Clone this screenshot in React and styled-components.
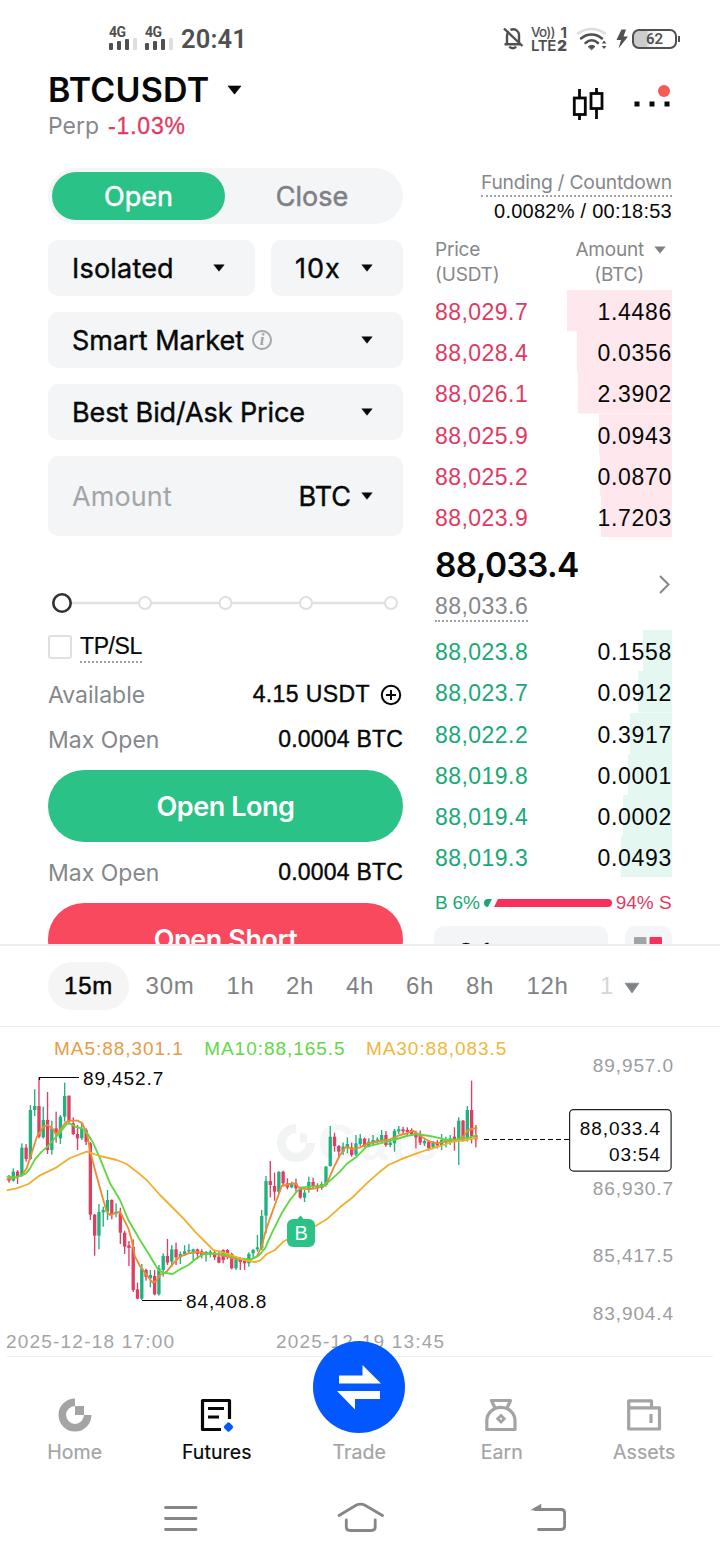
import React from 'react';
import styled, { createGlobalStyle, css } from 'styled-components';

const GlobalStyle = createGlobalStyle`
  * {
    box-sizing: border-box;
  }

  body {
    margin: 0;
    background-color: #ffffff;
  }

  svg {
    display: block;
    flex: none;
  }
`;

const textFont = css`
  font-family: Inter, "Liberation Sans", sans-serif;
`;

const numberFont = css`
  font-family: "Liberation Sans", Arial, sans-serif;
`;

const green = '#2bc287';
const red = '#f9495f';

const Screen = styled.div`
  ${textFont};
  display: flex;
  flex-direction: column;
  width: 720px;
  height: 1560px;
  overflow: hidden;

  background-color: #ffffff;
  color: #070808;
  white-space: nowrap;
`;

/* ---------- status bar ---------- */

const StatusBar = styled.div`
  display: flex;
  justify-content: space-between;
  align-items: center;
  flex: none;
  height: 77px;
  padding: 0 40px 0 109px;
  color: #505050;
`;

const StatusGroup = styled.div`
  display: flex;
  align-items: center;
`;

const Signal = styled.div`
  width: 36px;
  height: 26px;

  font-family: Roboto, sans-serif;
  font-size: 14px;
  font-weight: 700;
  line-height: 12px;
  letter-spacing: -0.5px;
`;

const Clock = styled.div`
  font-family: Roboto, sans-serif;
  font-size: 25.5px;
  font-weight: 600;
  letter-spacing: 0.15px;
`;

const Volte = styled.div`
  width: 36px;
  margin: 0 9px 0 7px;
`;

const VolteLine = styled.div`
  display: flex;
  justify-content: space-between;
  height: 13px;
  font-size: ${(p) => (p.$small ? '13.5px' : '15px')};
  font-weight: ${(p) => (p.$small ? 500 : 600)};
  line-height: 13px;
  letter-spacing: ${(p) => (p.$small ? '-0.8px' : '-0.4px')};

  b {
    font-size: 15px;
    letter-spacing: 0;
  }
`;

const Bolt = styled.svg`
  margin-left: 8px;
`;

const Battery = styled.div`
  display: flex;
  align-items: center;
  justify-content: center;
  width: 45px;
  height: 20px;
  margin-left: 4px;
  border: 2px solid #505050;
  border-radius: 7px;

  background: linear-gradient(90deg, #cccccc 30%, #e6e6e6 35%, #ffffff 60%);
  font-family: Roboto, sans-serif;
  font-size: 15px;
  font-weight: 600;
`;

const BatteryTip = styled.div`
  width: 2px;
  height: 6px;
  margin-left: 1px;
  background-color: #505050;
`;

/* ---------- header ---------- */

const Header = styled.header`
  display: flex;
  justify-content: space-between;
  flex: none;
  height: 91px;
  padding: 0 48px;
`;

const PairName = styled.div`
  display: flex;
  align-items: center;
  gap: 18px;
  height: 25px;
  font-size: 34px;
  font-weight: 600;
  letter-spacing: 0.2px;
`;

const PairInfo = styled.div`
  display: flex;
  align-items: center;
  gap: 9px;
  height: 48px;
  color: #85888b;
  font-size: 23px;
`;

const Change = styled.span`
  ${numberFont};
  color: #e23860;
  font-size: 23px;
  letter-spacing: 0.8px;
  -webkit-text-stroke: 0.3px #e23860;
`;

const HeaderIcons = styled.div`
  display: flex;
  gap: 28px;
  padding-top: 5px;
`;

/* ---------- trade form ---------- */

const Trade = styled.main`
  display: flex;
  gap: 31px;
  flex: none;
  height: 776px;
  padding: 0 48px;
  overflow: hidden;
`;

const Form = styled.section`
  display: flex;
  flex-direction: column;
  flex: none;
  width: 355px;

  > * {
    flex-shrink: 0;
  }
`;

const Toggle = styled.div`
  display: flex;
  height: 56px;
  padding: 4px;
  border-radius: 28px;
  background-color: #f3f5f7;
`;

const ToggleItem = styled.button`
  ${textFont};
  flex: ${(p) => (p.$active ? '0 0 173px' : '1')};
  border: none;
  border-radius: 24px;
  padding: 0;

  background-color: ${(p) => (p.$active ? green : 'transparent')};
  color: ${(p) => (p.$active ? '#ffffff' : '#7d8084')};
  font-size: 27px;
  -webkit-text-stroke: 0.5px currentColor;
`;

const FieldRow = styled.div`
  display: flex;
  gap: 16px;
  margin-top: 16px;
`;

const Field = styled.div`
  display: flex;
  align-items: center;
  flex: ${(p) => (p.$width ? `0 0 ${p.$width}px` : '1')};
  height: ${(p) => p.$height || 56}px;
  padding: 0 30px 0 24px;
  border-radius: 10px;

  background-color: #f3f5f7;
  font-size: 27px;
  letter-spacing: ${(p) => p.$spacing || 0}px;
  -webkit-text-stroke: 0.4px currentColor;
`;

const Placeholder = styled.span`
  color: #a2a5a8;
  letter-spacing: 0.1px;
  -webkit-text-stroke: 0;
`;

const Push = styled.span`
  margin-left: auto;
`;

const Unit = styled.span`
  margin: 0 10px 0 auto;
`;

const Info = styled.span`
  display: flex;
  align-items: center;
  justify-content: center;
  width: 20px;
  height: 20px;
  margin-left: 8px;
  border: 2px solid #a2a5a8;
  border-radius: 50%;

  color: #a2a5a8;
  font-family: "Liberation Serif", serif;
  font-size: 17px;
  font-style: italic;
  font-weight: 700;
  -webkit-text-stroke: 0;
`;

const Slider = styled.div`
  margin-top: 56px;
`;

const CheckRow = styled.div`
  display: flex;
  gap: 8px;
  height: 28px;
  margin-top: 21px;
`;

const Checkbox = styled.div`
  width: 24px;
  height: 24px;
  border: 2px solid #dfe0e2;
  border-radius: 3px;
`;

const Dotted = styled.span`
  border-bottom: 2px dotted #a0a3a6;
`;

const CheckLabel = styled(Dotted)`
  ${numberFont};
  height: 28px;
  font-size: 23px;
  line-height: 23px;
  letter-spacing: -0.4px;
  -webkit-text-stroke: 0.2px currentColor;
`;

const Stat = styled.div`
  display: flex;
  align-items: center;
  justify-content: space-between;
  height: 45px;
  margin-top: ${(p) => p.$top || 0}px;
  color: #85888b;
  font-size: 23px;
`;

const StatValue = styled.span`
  ${numberFont};
  display: flex;
  align-items: center;
  gap: 10px;
  color: #070808;
  letter-spacing: ${(p) => p.$spacing || 0.2}px;
  -webkit-text-stroke: 0.4px currentColor;
`;

const OrderButton = styled.button`
  ${textFont};
  height: 72px;
  margin-top: ${(p) => p.$top}px;
  border: none;
  border-radius: 36px;

  background-color: ${(p) => p.$color};
  color: #ffffff;
  font-size: 27px;
  font-weight: 600;
  letter-spacing: -0.45px;
`;

/* ---------- order book ---------- */

const Book = styled.section`
  display: flex;
  flex-direction: column;
  flex: none;
  width: 238px;
  padding-left: 1px;

  > * {
    flex-shrink: 0;
  }
`;

const Funding = styled.div`
  display: flex;
  flex-direction: column;
  align-items: flex-end;
  height: 69px;
  color: #85888b;
  font-size: 19.3px;
  letter-spacing: -0.25px;
`;

const FundingLabel = styled(Dotted)`
  height: 29px;
  line-height: 29px;
`;

const FundingValue = styled.div`
  ${numberFont};
  height: 28px;
  color: #070808;
  font-size: 20px;
  line-height: 29px;
  letter-spacing: 0.25px;
`;

const BookHead = styled.div`
  display: flex;
  justify-content: space-between;
  height: 53px;
  color: #85888b;
  font-size: 19px;
  line-height: 25px;
  letter-spacing: -0.2px;
`;

const HeadAmount = styled.div`
  display: flex;
  gap: 10px;
  text-align: right;
  padding-right: 6px;

  svg {
    margin-top: 9px;
  }
`;

const BookRow = styled.div`
  ${numberFont};
  display: flex;
  justify-content: space-between;
  height: 41.2px;

  color: ${(p) => (p.$side === 'ask' ? '#df3a62' : '#1aa876')};
  font-size: 23px;
  line-height: 44px;
  letter-spacing: 0.45px;
`;

const Depth = styled.div`
  width: 120px;
  height: 100%;
  color: #070808;
  text-align: right;
  letter-spacing: 0.7px;
  background: linear-gradient(${(p) => (p.$side === 'ask' ? '#ffe8ed, #ffe8ed' : '#e4f8f1, #e4f8f1')}) right / ${(p) => p.$fill}px 100% no-repeat;
`;

const Last = styled.div`
  display: flex;
  align-items: center;
  justify-content: space-between;
  height: 93px;
`;

const Prices = styled.div`
  padding-bottom: 8px;
`;

const LastPrice = styled.div`
  height: 54px;
  font-size: 33.5px;
  font-weight: 600;
  line-height: 54px;
  letter-spacing: -0.65px;
`;

const MarkPrice = styled(Dotted)`
  ${numberFont};
  display: inline-block;
  height: 30px;
  color: #85888b;
  font-size: 23px;
  line-height: 28px;
  letter-spacing: 0.45px;
  vertical-align: top;
`;

const Ratio = styled.div`
  ${numberFont};
  display: flex;
  align-items: center;
  gap: 4px;
  height: 20px;
  margin-top: 16px;
  font-size: 19px;
`;

const BuyShare = styled.span`
  color: #1aa876;
  letter-spacing: -0.2px;
`;

const SellShare = styled.span`
  color: #df3a62;
`;

const BookFooter = styled.div`
  display: flex;
  gap: 17px;
  margin: 13px 0 0 -1px;
`;

const Precision = styled.div`
  ${numberFont};
  width: 174px;
  height: 56px;
  padding-left: 25px;
  border-radius: 10px;
  background-color: #f3f5f7;
  font-size: 25px;
  line-height: 52px;
  -webkit-text-stroke: 0.4px currentColor;
`;

const BookView = styled.div`
  width: 47px;
  height: 47px;
  padding: 11px 9px;
  border-radius: 10px;
  background-color: #f3f5f7;
`;

/* ---------- chart ---------- */

const Intervals = styled.nav`
  ${numberFont};
  display: flex;
  align-items: center;
  flex: none;
  height: 83px;
  padding-left: 48px;
  border-top: 2px solid #ededee;
  border-bottom: 1px solid #ededee;
  color: #7f8285;
  font-size: 24px;

  svg {
    margin-top: 4px;
  }
`;

const Interval = styled.span`
  width: ${(p) => p.$width}px;
  height: 48px;
  border-radius: 24px;
  line-height: 48px;
  text-align: center;
  letter-spacing: 0.7px;

  ${(p) => p.$active && css`
    background-color: #f5f5f5;
    color: #070808;
    -webkit-text-stroke: 0.5px currentColor;
  `}
`;

const FadedInterval = styled.span`
  width: 39px;
  padding-left: 15px;
  color: #d5d6d7;
`;

const Chart = styled.section`
  display: grid;
  flex: none;
  height: 329px;

  > * {
    grid-area: 1 / 1;
  }
`;

const Legend = styled.div`
  ${numberFont};
  display: flex;
  gap: 20.5px;
  padding: 11px 0 0 54px;
  font-size: 19px;
  letter-spacing: 0.95px;
`;

const Average = styled.span`
  color: ${(p) => p.$color};
`;

const Plot = styled.svg`
  font-family: "Liberation Sans", Arial, sans-serif;
  font-size: 19px;
  letter-spacing: 0.9px;
`;

/* ---------- bottom navigation ---------- */

const TabBar = styled.nav`
  display: flex;
  flex: none;
  height: 119px;
  margin: 0 7px;
  border-top: 1px solid #ededee;
`;

const Tab = styled.div`
  display: flex;
  flex-direction: column;
  align-items: center;
  flex: 0 0 142.5px;
  padding-top: 38px;

  &:first-child {
    flex-basis: 138.5px;
    padding-right: 3px;
  }

  color: ${(p) => (p.$active ? '#070808' : '#a2a4a6')};
  font-size: 19.5px;
  letter-spacing: 0.1px;
  -webkit-text-stroke: 0.2px currentColor;
`;

const TabLabel = styled.span`
  height: 30px;
  margin-top: 2px;
  line-height: 30px;
`;

const TradeButton = styled.div`
  width: 92px;
  height: 92px;
  margin: -54px 0 2px;
  border-radius: 50%;
  background-color: #0257fe;
  z-index: 1;
`;

const SystemBar = styled.div`
  display: flex;
  align-items: flex-start;
  justify-content: space-between;
  padding: 25px 152px 0 163px;
`;

const Caret = ({ size = 12, height = 8, color = '#070808' }) => (
  <svg width={size} height={height} viewBox="0 0 12 8" preserveAspectRatio="none">
    <path d="M0.800 0.800H11.200L6 7.300Z" fill={color} stroke={color} strokeWidth="0.500" strokeLinejoin="round" />
  </svg>
);

const SignalBars = () => (
  <Signal>
    4G
    <svg width="28" height="12" viewBox="0 0 28 12">
      <rect x="0" y="5" width="4" height="7" rx="1" fill="#505050" />
      <rect x="8" y="3" width="4" height="9" rx="1" fill="#505050" />
      <rect x="16" y="1" width="4" height="11" rx="1" fill="#505050" />
      <rect x="24" y="0" width="4" height="12" rx="1" fill="#dedede" />
    </svg>
  </Signal>
);

const asks = [
  ['88,029.7', '1.4486', 105],
  ['88,028.4', '0.0356', 95],
  ['88,026.1', '2.3902', 94],
  ['88,025.9', '0.0943', 73],
  ['88,025.2', '0.0870', 72],
  ['88,023.9', '1.7203', 71],
];

const bids = [
  ['88,023.8', '0.1558', 29],
  ['88,023.7', '0.0912', 34],
  ['88,022.2', '0.3917', 42],
  ['88,019.8', '0.0001', 44],
  ['88,019.4', '0.0002', 49],
  ['88,019.3', '0.0493', 51],
];

const intervals = [['15m', 81], ['30m', 82], ['1h', 59], ['2h', 60], ['4h', 60], ['6h', 60], ['8h', 60], ['12h', 75]];

// rising flag, wick top, body top, body bottom, wick bottom
const candles = [
  [0, 345, 355, 362, 368], [1, 325, 335, 362, 365], [0, 330, 335, 350, 372], [1, 250, 263, 347, 350],
  [0, 252, 263, 297, 305], [1, 135, 150, 297, 300], [1, 88, 138, 150, 168], [0, 52, 138, 230, 235],
  [1, 140, 180, 232, 236], [0, 96, 180, 270, 282], [1, 182, 205, 270, 284], [0, 155, 205, 222, 248],
  [1, 165, 170, 235, 252], [1, 68, 108, 170, 185], [0, 107, 107, 185, 188], [0, 172, 190, 222, 225],
  [0, 195, 222, 235, 270], [1, 190, 205, 235, 240], [0, 205, 210, 245, 255], [0, 246, 250, 464, 480],
  [0, 462, 464, 527, 587], [1, 432, 456, 527, 568], [1, 440, 450, 457, 500], [1, 390, 420, 455, 480],
  [0, 418, 420, 462, 478], [1, 430, 455, 462, 472], [0, 443, 460, 518, 552], [0, 512, 518, 560, 582],
  [0, 543, 556, 564, 618], [0, 538, 560, 690, 696], [0, 668, 688, 716, 718], [1, 612, 625, 716, 720],
  [0, 626, 630, 650, 662], [1, 630, 645, 655, 682], [0, 630, 648, 703, 706], [1, 615, 625, 703, 707],
  [1, 580, 588, 630, 650], [0, 537, 588, 608, 615], [1, 555, 568, 605, 620], [0, 548, 568, 592, 615],
  [1, 575, 582, 592, 612], [1, 556, 574, 582, 588], [1, 552, 570, 574, 580], [1, 566, 568, 575, 600],
  [0, 566, 568, 582, 598], [0, 568, 574, 585, 595], [1, 573, 576, 582, 605], [1, 570, 575, 580, 592],
  [0, 570, 578, 592, 600], [0, 572, 590, 608, 610], [0, 568, 570, 600, 610], [0, 567, 570, 585, 598],
  [0, 578, 582, 625, 628], [1, 590, 598, 625, 630], [0, 592, 600, 606, 630], [0, 598, 602, 610, 630],
  [1, 577, 582, 610, 620], [1, 567, 570, 580, 592], [1, 525, 562, 568, 575], [1, 450, 468, 565, 570],
  [1, 348, 363, 467, 520], [0, 303, 363, 375, 412], [0, 338, 378, 395, 422], [1, 333, 336, 395, 400],
  [0, 332, 335, 370, 375], [0, 355, 370, 382, 388], [1, 365, 370, 382, 385], [0, 356, 370, 385, 395],
  [0, 380, 385, 413, 416], [1, 390, 398, 413, 426], [1, 350, 366, 390, 398], [0, 353, 366, 378, 385],
  [0, 370, 376, 384, 395], [1, 365, 372, 384, 390], [1, 318, 320, 375, 380], [1, 198, 230, 318, 320],
  [0, 218, 230, 258, 275], [0, 255, 258, 275, 290], [1, 248, 260, 275, 285], [1, 232, 252, 262, 280],
  [0, 248, 262, 285, 290], [1, 225, 250, 284, 288], [1, 222, 235, 252, 258], [0, 233, 236, 258, 262],
  [1, 235, 245, 258, 262], [1, 225, 240, 250, 255], [1, 232, 238, 242, 250], [1, 210, 225, 240, 245],
  [0, 213, 225, 255, 260], [1, 240, 248, 255, 262], [1, 207, 212, 250, 275], [1, 198, 208, 214, 222],
  [0, 200, 208, 214, 225], [0, 202, 210, 216, 228], [0, 205, 210, 222, 228], [0, 212, 218, 232, 265],
  [0, 212, 225, 248, 255], [1, 238, 243, 250, 258], [0, 240, 245, 265, 272], [1, 243, 248, 262, 268],
  [0, 240, 248, 256, 265], [1, 222, 240, 255, 270], [1, 230, 240, 248, 262], [1, 225, 235, 245, 255],
  [0, 202, 230, 245, 272], [1, 172, 182, 240, 315], [0, 180, 182, 240, 245], [1, 138, 150, 235, 245],
  [0, 62, 150, 230, 250], [0, 195, 226, 238, 262],
];

const ma5 = '20,357 48,352 66,345 80,325 95,280 110,232 130,200 143,195 155,203 168,222 182,208 195,190 205,182 233,182 247,190 262,225 272,280 285,330 300,385 320,455 330,465 345,460 360,455 370,475 385,505 395,540 405,590 420,618 440,645 458,668 470,662 480,645 500,635 520,610 540,590 565,580 590,576 615,580 660,584 700,595 720,598 750,600 770,590 785,560 795,520 810,475 830,420 845,378 870,372 885,370 900,385 925,388 945,385 970,380 985,360 1000,325 1020,285 1038,260 1060,268 1080,262 1105,250 1140,243 1170,238 1200,225 1220,220 1240,212 1265,230 1290,245 1310,250 1340,243 1370,240 1390,230 1405,210 1432,203';
const ma10 = '20,350 50,352 78,340 90,325 105,298 125,275 140,262 160,240 180,218 200,192 210,190 225,200 245,205 262,220 280,250 300,295 330,370 360,420 385,480 420,540 445,580 475,630 490,638 518,642 540,628 565,615 590,595 610,583 640,580 680,585 720,595 750,598 775,588 795,565 815,520 845,460 870,420 890,395 905,382 935,380 975,375 990,362 1020,335 1040,312 1070,290 1100,260 1140,250 1180,240 1220,228 1250,222 1300,230 1340,240 1370,238 1410,232 1432,225';
const ma30 = '20,391 50,385 85,372 120,346 170,322 210,294 260,275 300,288 350,300 380,312 410,335 440,360 480,405 510,435 550,475 590,520 640,570 680,580 700,588 740,602 765,606 780,602 800,582 825,570 850,545 870,533 905,515 950,496 980,478 1020,442 1060,410 1100,370 1140,335 1165,315 1210,295 1250,280 1280,270 1320,258 1360,245 1400,240 1432,232';

const candleX = (i) => 27 + i * 12.85;

const PriceChart = () => (
  <Plot width="720" height="329" viewBox="0 1027 720 329">
    <g fill="none" stroke="#f2f3f3" strokeWidth="9">
      <path d="M296 1128.500a14.500 14.500 0 1 0 14.500 14.500" />
      <path d="M300 1138h7" />
    </g>
    <text x="318" y="1160" fontSize="50" fontWeight="700" fill="#f5f6f6" letterSpacing="3">Gate</text>

    <g transform="translate(0 1060) scale(0.33333)">
      {candles.map(([up, top, bodyTop, bodyBottom, bottom], i) => (
        <g key={i} fill={up ? '#1fb17e' : '#e03d63'}>
          <rect x={candleX(i) - 2} y={top} width="4" height={bottom - top} />
          <rect x={candleX(i) - 5} y={bodyTop} width="10" height={bodyBottom - bodyTop} />
        </g>
      ))}
      <g fill="none" strokeWidth="5.500" strokeLinejoin="round">
        <polyline points={ma5} stroke="#ec8b33" />
        <polyline points={ma10} stroke="#5fd643" />
        <polyline points={ma30} stroke="#efb02d" />
      </g>
    </g>

    <g stroke="#070808" strokeWidth="1.200" fill="none">
      <path d="M39.500 1080V1077.500H79" />
      <path d="M142 1300.500H182" />
      <path d="M484 1139.500H569" strokeDasharray="5 3" />
    </g>
    <text x="83" y="1085" fill="#070808">89,452.7</text>
    <text x="186" y="1308" fill="#070808">84,408.8</text>

    <path d="M300.500 1215.500l4.500 5h-9z" fill={green} />
    <rect x="287" y="1219" width="28" height="28" rx="6" fill={green} />
    <text x="301.500" y="1240" textAnchor="middle" fill="#ffffff" fontSize="20">B</text>

    <g fill="#9b9d9f" textAnchor="end">
      <text x="674" y="1072">89,957.0</text>
      <text x="674" y="1195">86,930.7</text>
      <text x="674" y="1262">85,417.5</text>
      <text x="674" y="1320">83,904.4</text>
    </g>
    <rect x="569.600" y="1109.600" width="101.500" height="61.500" rx="4" fill="#ffffff" stroke="#222222" strokeWidth="1.200" />
    <g fill="#070808" textAnchor="end">
      <text x="661" y="1135">88,033.4</text>
      <text x="661" y="1161">03:54</text>
    </g>
    <g fill="#a3a5a7" letterSpacing="1.200">
      <text x="6" y="1348">2025-12-18 17:00</text>
      <text x="276" y="1348">2025-12-19 13:45</text>
    </g>
  </Plot>
);

export default function App() {
  return (
    <Screen>
      <GlobalStyle />
      <StatusBar>
        <StatusGroup>
          <SignalBars />
          <SignalBars />
          <Clock>20:41</Clock>
        </StatusGroup>
        <StatusGroup>
          <svg width="22" height="24" viewBox="0 0 22 24" fill="none" stroke="#505050" strokeWidth="2.400">
            <path d="M2.500 17.300H18.500M5 17V9a6 6 0 0 1 2-4.500M8.500 2.800a6 6 0 0 1 8.500 6.200v6.500" />
            <path d="M7.500 19.500c1 2.300 5.500 2.300 6.500 0" />
            <path d="M2 1.500L20.500 19" />
          </svg>
          <Volte>
            <VolteLine $small>Vo)) <b>1</b></VolteLine>
            <VolteLine>LTE<b>2</b></VolteLine>
          </Volte>
          <svg width="32" height="24" viewBox="0 0 32 24" fill="none" strokeWidth="2.500" strokeLinecap="round">
            <path d="M2 6.500c8-6 19-6 27 0" stroke="#dedede" />
            <path d="M5 11.500c6-5.500 15-5.500 21 0M9.500 16c4-3.500 8.500-3.500 12.500 0" stroke="#505050" />
            <path d="M12.500 19.500c2-1.500 4.500-1.500 6.500 0l-3.200 3z" fill="#505050" strokeWidth="1" stroke="#505050" />
            <path d="M25.800 16.500l2.300-3 2.300 3zM25.800 19l2.300 3 2.300-3z" fill="#505050" />
          </svg>
          <Bolt width="12" height="20" viewBox="0 0 12 20">
            <path d="M5.500 0.500H10L7.500 7.500H12L2.500 19.500L5 11H0.500Z" fill="#505050" />
          </Bolt>
          <Battery>62</Battery>
          <BatteryTip />
        </StatusGroup>
      </StatusBar>

      <Header>
        <div>
          <PairName>BTCUSDT <Caret size={15} height={10} /></PairName>
          <PairInfo>Perp <Change>-1.03%</Change></PairInfo>
        </div>
        <HeaderIcons>
          <svg width="34" height="42" viewBox="572 82 34 42" fill="none" stroke="#070808" strokeWidth="2.800">
            <rect x="574.300" y="98" width="11" height="16.500" />
            <rect x="591" y="93.500" width="11" height="15" />
            <path d="M579.500 89v9M579.500 114v6M596.500 88v6M596.500 108v11" />
          </svg>
          <svg width="38" height="42" viewBox="634 82 38 42" fill="#070808">
            <rect x="634.500" y="101.500" width="5" height="5" />
            <rect x="649.500" y="101.500" width="5" height="5" />
            <rect x="664.500" y="101.500" width="5" height="5" />
            <circle cx="664" cy="91" r="6" fill="#f45b53" />
          </svg>
        </HeaderIcons>
      </Header>

      <Trade>
        <Form>
          <Toggle>
            <ToggleItem $active>Open</ToggleItem>
            <ToggleItem>Close</ToggleItem>
          </Toggle>
          <FieldRow>
            <Field $width={207} $spacing={0.2}>Isolated <Push><Caret /></Push></Field>
            <Field $spacing={1}>10x <Push><Caret /></Push></Field>
          </FieldRow>
          <FieldRow>
            <Field>Smart Market <Info>i</Info> <Push><Caret /></Push></Field>
          </FieldRow>
          <FieldRow>
            <Field $spacing={-0.1}>Best Bid/Ask Price <Push><Caret /></Push></Field>
          </FieldRow>
          <FieldRow>
            <Field $height={80}>
              <Placeholder>Amount</Placeholder>
              <Unit>BTC</Unit>
              <Caret />
            </Field>
          </FieldRow>

          <Slider>
            <svg width="355" height="22" viewBox="0 0 355 22">
              <path d="M14 11H343" stroke="#e0e1e2" strokeWidth="2.500" />
              {[97, 177.5, 258, 343].map((x) => (
                <circle key={x} cx={x} cy="11" r="6" fill="#ffffff" stroke="#dddfe0" strokeWidth="2" />
              ))}
              <circle cx="14" cy="11" r="8.700" fill="#ffffff" stroke="#303132" strokeWidth="2.600" />
            </svg>
          </Slider>

          <CheckRow>
            <Checkbox />
            <CheckLabel>TP/SL</CheckLabel>
          </CheckRow>

          <Stat $top={9}>
            Available
            <StatValue $spacing={0.4}>
              4.15 USDT
              <svg width="23" height="22" viewBox="0 0 23 22" fill="none" stroke="#070808" strokeWidth="2">
                <circle cx="11" cy="11" r="9.200" />
                <path d="M6 11h10M11 6v10" />
              </svg>
            </StatValue>
          </Stat>
          <Stat>Max Open <StatValue>0.0004 BTC</StatValue></Stat>
          <OrderButton $color={green} $top={8}>Open Long</OrderButton>
          <Stat $top={8}>Max Open <StatValue>0.0004 BTC</StatValue></Stat>
          <OrderButton $color={red} $top={8}>Open Short</OrderButton>
        </Form>

        <Book>
          <Funding>
            <FundingLabel>Funding / Countdown</FundingLabel>
            <FundingValue>0.0082% / 00:18:53</FundingValue>
          </Funding>
          <BookHead>
            <div>Price<br />(USDT)</div>
            <HeadAmount>
              <div>Amount<br />(BTC)</div>
              <Caret color="#7f8285" />
            </HeadAmount>
          </BookHead>
          {asks.map(([price, amount, fill]) => (
            <BookRow key={price} $side="ask">
              {price}
              <Depth $side="ask" $fill={fill}>{amount}</Depth>
            </BookRow>
          ))}
          <Last>
            <Prices>
              <LastPrice>88,033.4</LastPrice>
              <MarkPrice>88,033.6</MarkPrice>
            </Prices>
            <svg width="14" height="20" viewBox="0 0 14 20" fill="none" stroke="#85888b" strokeWidth="2">
              <path d="M2 2L10.500 10.500L2 19" />
            </svg>
          </Last>
          {bids.map(([price, amount, fill]) => (
            <BookRow key={price} $side="bid">
              {price}
              <Depth $side="bid" $fill={fill}>{amount}</Depth>
            </BookRow>
          ))}
          <Ratio>
            <BuyShare>B 6%</BuyShare>
            <svg width="128" height="8" viewBox="0 0 128 8">
              <path d="M4 0H8L4 8A4 4 0 0 1 4 0Z" fill="#1aa876" />
              <path d="M14 0H124A4 4 0 0 1 124 8H10Z" fill="#f9305c" />
            </svg>
            <SellShare>94% S</SellShare>
          </Ratio>
          <BookFooter>
            <Precision>0.1</Precision>
            <BookView>
              <svg width="28" height="28" viewBox="0 0 28 28">
                <rect width="12.500" height="28" rx="1" fill="#a2a4a6" />
                <rect x="15.500" width="12.500" height="12.500" rx="1" fill="#f9305c" />
                <rect x="15.500" y="15.500" width="12.500" height="12.500" rx="1" fill={green} />
              </svg>
            </BookView>
          </BookFooter>
        </Book>
      </Trade>

      <Intervals>
        {intervals.map(([label, width], i) => (
          <Interval key={label} $width={width} $active={i === 0}>{label}</Interval>
        ))}
        <FadedInterval>1</FadedInterval>
        <Caret size={16} height={12} color="#7f8285" />
      </Intervals>

      <Chart>
        <PriceChart />
        <Legend>
          <Average $color="#ea9a44">MA5:88,301.1</Average>
          <Average $color="#62d846">MA10:88,165.5</Average>
          <Average $color="#efb73a">MA30:88,083.5</Average>
        </Legend>
      </Chart>

      <TabBar>
        <Tab>
          <svg width="38" height="40" viewBox="56 1395 38 40">
            <path d="M75 1402.300a12.700 12.700 0 1 0 12.700 12.700" fill="none" stroke="#a2a4a6" strokeWidth="7.600" />
            <rect x="75" y="1406" width="9" height="9" fill="#a2a4a6" />
          </svg>
          <TabLabel>Home</TabLabel>
        </Tab>
        <Tab $active>
          <svg width="38" height="40" viewBox="198 1395 38 40" fill="none" stroke="#070808" strokeWidth="3.200">
            <path d="M221 1429.500H202.500V1400.500H229.500V1419" strokeLinejoin="round" />
            <path d="M208 1408.500h16M208 1417h11" />
            <path d="M228.500 1424l3 3l-3 3l-3-3z" fill="#0257fe" stroke="#0257fe" strokeLinejoin="round" />
          </svg>
          <TabLabel>Futures</TabLabel>
        </Tab>
        <Tab>
          <TradeButton>
            <svg width="92" height="92" viewBox="313 1341 92 92" fill="#ffffff">
              <path d="M339 1375.500H362.500V1365L381 1383.500H339Z" />
              <path d="M380 1391H337L355 1409.500V1399H380Z" />
            </svg>
          </TradeButton>
          <TabLabel>Trade</TabLabel>
        </Tab>
        <Tab>
          <svg width="38" height="40" viewBox="483 1395 38 40" fill="none" stroke="#a2a4a6" strokeWidth="3.200">
            <path d="M486.800 1429.500V1420.500A14 13 0 0 1 515 1420.500V1429.500Z" strokeLinejoin="round" />
            <path d="M495 1408L491.500 1400.500H510.500L507 1408" strokeLinejoin="round" />
            <path d="M501 1415.500l3.300 3.300l-3.300 3.300l-3.300-3.300z" strokeWidth="2.800" />
          </svg>
          <TabLabel>Earn</TabLabel>
        </Tab>
        <Tab>
          <svg width="38" height="40" viewBox="625 1395 38 40" fill="none" stroke="#a2a4a6" strokeWidth="3.200" strokeLinejoin="round">
            <path d="M628.700 1407.800H659.500V1429H628.700V1400.800H651.500V1407" />
            <path d="M651 1414v9" />
          </svg>
          <TabLabel>Assets</TabLabel>
        </Tab>
      </TabBar>

      <SystemBar>
        <svg width="36" height="36" viewBox="163 1500 36 36" fill="none" stroke="#868686" strokeWidth="2.800" strokeLinecap="round">
          <path d="M165.500 1507.500H196M165.500 1518.500H196M165.500 1529.500H196" />
        </svg>
        <svg width="50" height="36" viewBox="336 1500 50 36" fill="none" stroke="#868686" strokeWidth="2.800" strokeLinecap="round">
          <path d="M339 1515.500L356 1505.300Q360.500 1503 365 1505.300L382.500 1515.500" />
          <path d="M346.300 1520V1527Q346.300 1530.500 350 1530.500H371.500Q375.200 1530.500 375.200 1527V1520" />
        </svg>
        <svg width="45" height="36" viewBox="523 1500 45 36" fill="none" stroke="#868686" strokeWidth="2.800" strokeLinecap="round">
          <path d="M535 1509.500H561Q564.600 1509.500 564.600 1513V1526Q564.600 1529.500 561 1529.500H538.500" />
          <path d="M533 1509.500L540.500 1505V1509.500Z" fill="#868686" strokeWidth="1.500" />
        </svg>
      </SystemBar>
    </Screen>
  );
}
